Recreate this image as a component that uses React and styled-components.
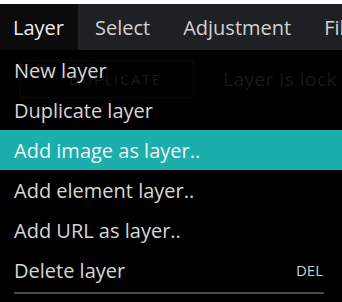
import React from "react";
import styled, { createGlobalStyle } from "styled-components";

const Global = createGlobalStyle`
  html, body { margin: 0; padding: 0; background: #ffffff; }
  body { font-family: "Open Sans", "Noto Sans", sans-serif; }
  #root { width: 342px; height: 302px; overflow: hidden; }
`;

const Screen = styled.div`
  position: relative;
  width: 342px;
  height: 302px;
  padding-top: 4px;
  box-sizing: border-box;
  display: flex;
  flex-direction: column;
  overflow: hidden;
`;

const MenuBar = styled.nav`
  display: flex;
  height: 46px;
  background: #1f2023;
  flex: none;
  white-space: nowrap;
`;

const Tab = styled.div`
  display: flex;
  align-items: center;
  padding-left: ${(p) => (p.$active ? "13px" : "17px")};
  padding-right: ${(p) => (p.$active ? "14px" : "16px")};
  background: ${(p) => (p.$active ? "#0b0b0b" : "transparent")};
  color: ${(p) => (p.$active ? "#ececec" : "#d2d2d2")};
  font-size: 20px;
`;

const Workspace = styled.div`
  position: relative;
  flex: 1;
  background: #000;
`;

const Toolbar = styled.div`
  display: flex;
  align-items: center;
  width: 337px;
  height: 40px;
  margin-top: 9px;
  padding-left: 20px;
  box-sizing: border-box;
  overflow: hidden;
`;

const GhostButton = styled.div`
  display: flex;
  align-items: center;
  flex: none;
  height: 38px;
  width: 174px;
  padding-left: 48px;
  box-sizing: border-box;
  border: 1px solid #141414;
  color: #303030;
  font-size: 15px;
  letter-spacing: 1.6px;
`;

const GhostText = styled.div`
  margin-left: 29px;
  color: #303030;
  font-size: 19px;
  letter-spacing: 0.5px;
  white-space: nowrap;
`;

const Dropdown = styled.ul`
  position: absolute;
  top: 0;
  left: 0;
  right: 0;
  margin: 0;
  padding: 0;
  list-style: none;
  background: rgba(0, 0, 0, 0.5);
`;

const Item = styled.li`
  display: flex;
  align-items: center;
  justify-content: space-between;
  height: 40px;
  padding: 0 19px 0 14px;
  background: ${(p) => (p.$active ? "#1cadad" : "transparent")};
  color: ${(p) => (p.$active ? "#f2f2f2" : "#d6d6d6")};
  font-size: 20px;
`;

const Shortcut = styled.span`
  font-size: 15px;
  color: #cfcfcf;
`;

const Separator = styled.li`
  height: 11px;
  padding: 2px 0 0 14px;
  box-sizing: border-box;
  background: #000;
  &::before {
    content: "";
    display: block;
    width: 310px;
    height: 2px;
    background: #4a4a4a;
  }
`;

const items = [
  { label: "New layer" },
  { label: "Duplicate layer" },
  { label: "Add image as layer..", active: true },
  { label: "Add element layer.." },
  { label: "Add URL as layer.." },
  { label: "Delete layer", shortcut: "DEL" },
];

export default function App() {
  return (
    <>
      <Global />
      <Screen>
        <MenuBar>
          <Tab $active>Layer</Tab>
          <Tab>Select</Tab>
          <Tab>Adjustment</Tab>
          <Tab>Filters</Tab>
        </MenuBar>
        <Workspace>
          <Toolbar>
            <GhostButton>DUPLICATE</GhostButton>
            <GhostText>Layer is locked</GhostText>
          </Toolbar>
          <Dropdown>
            {items.map((it) => (
              <Item key={it.label} $active={it.active}>
                <span>{it.label}</span>
                {it.shortcut && <Shortcut>{it.shortcut}</Shortcut>}
              </Item>
            ))}
            <Separator />
          </Dropdown>
        </Workspace>
      </Screen>
    </>
  );
}
